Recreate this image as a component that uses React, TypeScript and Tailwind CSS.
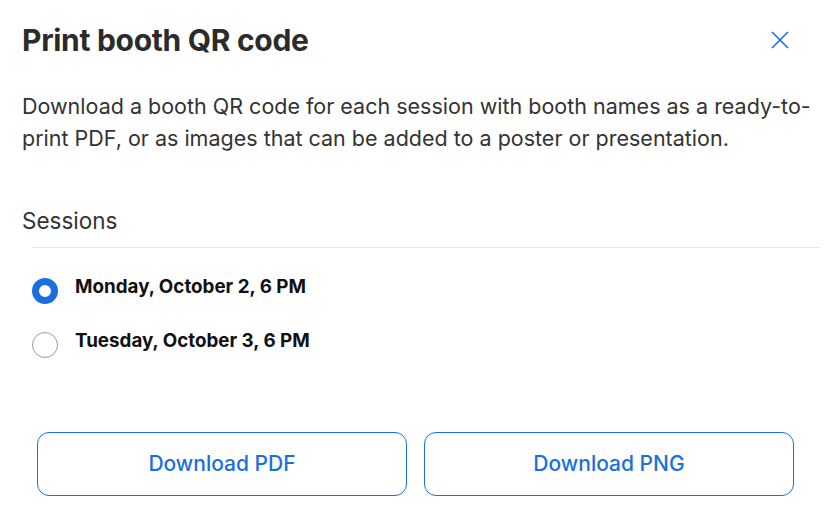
import { useState } from "react";

const sessions = ["Monday, October 2, 6 PM", "Tuesday, October 3, 6 PM"];

export default function App() {
  const [selected, setSelected] = useState(0);

  return (
    <div className="w-[830px] h-[516px] bg-white font-['Inter',sans-serif] text-[#2b2b2b] overflow-hidden">
      <div className="flex items-center justify-between pl-[22px] pr-[40px] pt-[22px]">
        <h2 className="text-[30px] leading-[36px] font-bold tracking-[-0.3px]">Print booth QR code</h2>
        <button className="text-[#1a6fe0]" aria-label="Close">
          <svg width="20" height="20" viewBox="0 0 20 20" fill="none" stroke="currentColor" strokeWidth="1.6">
            <path d="M2 2 L18 18 M18 2 L2 18" />
          </svg>
        </button>
      </div>

      <p className="mt-[32px] pl-[22px] pr-[12px] text-[21.5px] leading-[32px] text-[#333]">
        Download a booth QR code for each session with booth names as a ready-to-print PDF, or as images that can be added to a poster or presentation.
      </p>

      <h3 className="mt-[53px] pl-[22px] text-[22.5px] leading-[28px] text-[#333]">Sessions</h3>
      <div className="mt-[12px] ml-[32px] mr-[10px] h-px bg-[#e6e6e6]" />

      <div className="mt-[30px] pl-[32px] flex flex-col gap-[28px]">
        {sessions.map((s, i) => (
          <label key={s} className="flex items-center gap-[17px] cursor-pointer" onClick={() => setSelected(i)}>
            {selected === i ? (
              <span className="w-[26px] h-[26px] rounded-full border-[7px] border-[#1a6fe0] bg-white" />
            ) : (
              <span className="w-[26px] h-[26px] rounded-full border border-[#9a9a9a] bg-white" />
            )}
            <span className="text-[18.8px] leading-[26px] font-bold text-[#111] -mt-[8px]">{s}</span>
          </label>
        ))}
      </div>

      <div className="mt-[74px] pl-[37px] pr-[36px] grid grid-cols-2 gap-[17px]">
        <button className="h-[64px] rounded-[12px] border border-[#1a6fe0] text-[#1a6fe0] text-[21px] font-medium">
          Download PDF
        </button>
        <button className="h-[64px] rounded-[12px] border border-[#1a6fe0] text-[#1a6fe0] text-[21px] font-medium">
          Download PNG
        </button>
      </div>
    </div>
  );
}
